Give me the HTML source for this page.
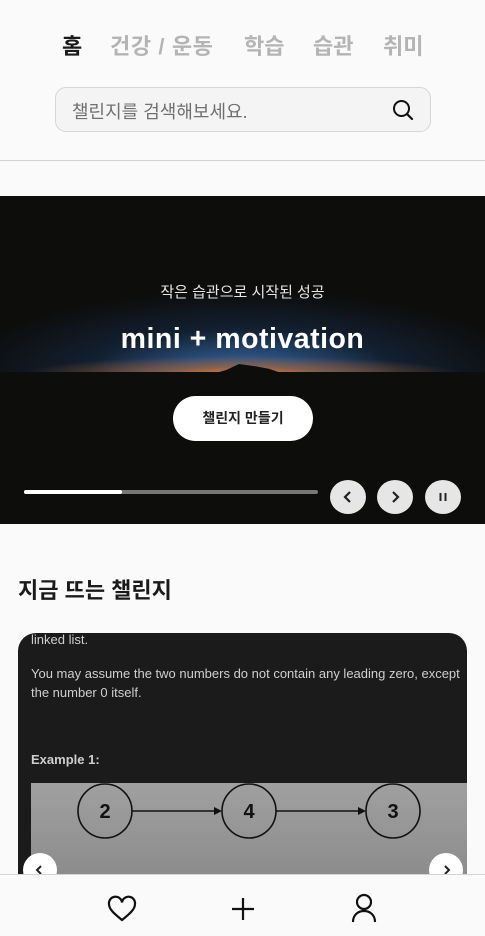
<!DOCTYPE html>
<html><head><meta charset="utf-8"><style>
*{margin:0;padding:0;box-sizing:border-box}
body{width:485px;height:936px;overflow:hidden;background:#fafafa;font-family:"Liberation Sans","Noto Sans CJK KR",sans-serif;position:relative}
.nav{position:absolute;top:29px;left:0;width:485px;height:32px;font-size:22px;font-weight:bold;color:#b4b4b4}
.nav span{position:absolute;top:0;white-space:nowrap}
.search{position:absolute;left:55px;top:87px;width:376px;height:45px;border:1px solid #d6d6d6;border-radius:11px;background:#f4f4f4}
.search .ph{position:absolute;left:16px;top:10px;font-size:18px;color:#707070}
.div{position:absolute;top:160px;left:0;width:485px;height:1px;background:#d4d4d4}
.hero{position:absolute;top:196px;left:0;width:485px;height:328px;background:#0d0d0c;overflow:hidden}
.glow{position:absolute;left:-40px;top:95px;width:565px;height:85px;background:radial-gradient(ellipse 50% 100% at 50% 100%,rgba(90,120,150,.9) 0%,rgba(50,100,160,.75) 25%,rgba(25,55,95,.45) 55%,rgba(0,0,0,0) 100%)}
.hz{position:absolute;left:0;top:160px;width:485px;height:18px;background:radial-gradient(ellipse 45% 100% at 50% 100%,rgba(225,120,40,.95) 0%,rgba(180,100,50,.6) 40%,rgba(0,0,0,0) 100%)}
.ground{position:absolute;left:0;top:176px;width:485px;height:152px;background:#0d0d0c}
.mtn{position:absolute;left:205px;top:168px;width:85px;height:12px;background:#0d0d0c;clip-path:polygon(0 100%,25% 50%,40% 0,60% 20%,75% 40%,100% 100%)}
.h-sub{position:absolute;top:85px;width:100%;text-align:center;color:#e6e6e6;font-size:15px}
.h-title{position:absolute;top:127px;width:100%;text-align:center;color:#fff;font-size:28.5px;font-weight:bold;letter-spacing:.5px}
.btn{position:absolute;left:173px;top:200px;width:140px;height:45px;border-radius:23px;background:#fff;color:#222;font-size:14px;font-weight:bold;text-align:center;line-height:45px}
.bar{position:absolute;left:24px;top:294px;width:294px;height:4px;background:#777;border-radius:2px}
.bar i{position:absolute;left:0;top:0;width:98px;height:4px;background:#fff;border-radius:2px}
.cb{position:absolute;top:284px;width:36px;height:34px;border-radius:50%;background:#e6e6e6}
.cb svg{position:absolute;left:0;top:0}
h2{position:absolute;left:18px;top:573px;font-size:22px;font-weight:bold;color:#1a1a1a}
.card{position:absolute;left:18px;top:633px;width:449px;height:260px;border-radius:18px 18px 0 0;background:#1b1b1b;overflow:hidden;color:#cfcfcf;font-size:13px}
.card p{position:absolute;left:13px;white-space:nowrap}
.img{position:absolute;left:13px;top:150px;width:436px;height:110px;background:linear-gradient(#a0a0a0,#888)}
.sb{position:absolute;top:853px;width:34px;height:34px;border-radius:50%;background:#fff}
.bot{position:absolute;top:874px;left:0;width:485px;height:62px;background:#fafafa;border-top:1px solid #d4d4d4}
</style></head><body>
<div class="nav">
<span style="left:62px;color:#1a1a1a">홈</span>
<span style="left:110px;letter-spacing:.6px">건강 / 운동</span>
<span style="left:244px">학습</span>
<span style="left:313px">습관</span>
<span style="left:383px">취미</span>
</div>
<div class="search"><span class="ph">챌린지를 검색해보세요.</span>
<svg style="position:absolute;left:336px;top:11px" width="22" height="22" viewBox="0 0 22 22"><circle cx="9.5" cy="9.5" r="7.5" fill="none" stroke="#111" stroke-width="2"/><line x1="15" y1="15" x2="20" y2="20" stroke="#111" stroke-width="2.2" stroke-linecap="round"/></svg></div>
<div class="div"></div>
<div class="hero">
<div class="glow"></div><div class="hz"></div><div class="ground"></div><div class="mtn"></div>
<div class="h-sub">작은 습관으로 시작된 성공</div>
<div class="h-title">mini + motivation</div>
<div class="btn">챌린지 만들기</div>
<div class="bar"><i></i></div>
<div class="cb" style="left:330px"><svg width="36" height="34"><path d="M20 12l-5 5 5 5" fill="none" stroke="#222" stroke-width="2.2"/></svg></div>
<div class="cb" style="left:377px"><svg width="36" height="34"><path d="M16 12l5 5-5 5" fill="none" stroke="#222" stroke-width="2.2"/></svg></div>
<div class="cb" style="left:425px"><svg width="36" height="34"><path d="M15.5 13v8M20.5 13v8" stroke="#222" stroke-width="2"/></svg></div>
</div>
<h2>지금 뜨는 챌린지</h2>
<div class="card">
<p style="top:-1px">linked list.</p>
<p style="top:33px">You may assume the two numbers do not contain any leading zero, except</p>
<p style="top:52px">the number 0 itself.</p>
<p style="top:119px;font-weight:bold">Example 1:</p>
<div class="img"><svg width="436" height="110" viewBox="0 0 436 110">
<g fill="none" stroke="#111" stroke-width="1.6"><circle cx="74" cy="28" r="27"/><circle cx="218" cy="28" r="27"/><circle cx="362" cy="28" r="27"/>
<line x1="101" y1="28" x2="186" y2="28"/><line x1="245" y1="28" x2="330" y2="28"/></g>
<path d="M191 28l-8-4v8zM335 28l-8-4v8z" fill="#111"/>
<g font-size="20" font-weight="bold" fill="#111" text-anchor="middle" font-family="Liberation Sans,sans-serif"><text x="74" y="35">2</text><text x="218" y="35">4</text><text x="362" y="35">3</text></g></svg></div>
</div>
<div class="sb" style="left:23px"><svg width="34" height="34"><path d="M18 13l-4 4 4 4" fill="none" stroke="#222" stroke-width="2"/></svg></div>
<div class="sb" style="left:429px"><svg width="34" height="34"><path d="M16 13l4 4-4 4" fill="none" stroke="#222" stroke-width="2"/></svg></div>
<div class="bot">
<svg style="position:absolute;left:107px;top:20px" width="30" height="28" viewBox="0 0 30 28"><path d="M15 25C9 20 2 15 2 9a6.5 6.5 0 0 1 13-1.5A6.5 6.5 0 0 1 28 9c0 6-7 11-13 16z" fill="none" stroke="#111" stroke-width="2.2"/></svg>
<svg style="position:absolute;left:230px;top:21px" width="26" height="26"><path d="M13 2v22M2 13h22" stroke="#111" stroke-width="2.2"/></svg>
<svg style="position:absolute;left:350px;top:18px" width="28" height="30" viewBox="0 0 28 30"><circle cx="14" cy="9" r="7" fill="none" stroke="#111" stroke-width="2.2"/><path d="M3 29c0-7 5-11 11-11s11 4 11 11" fill="none" stroke="#111" stroke-width="2.2"/></svg>
</div>
</body></html>
